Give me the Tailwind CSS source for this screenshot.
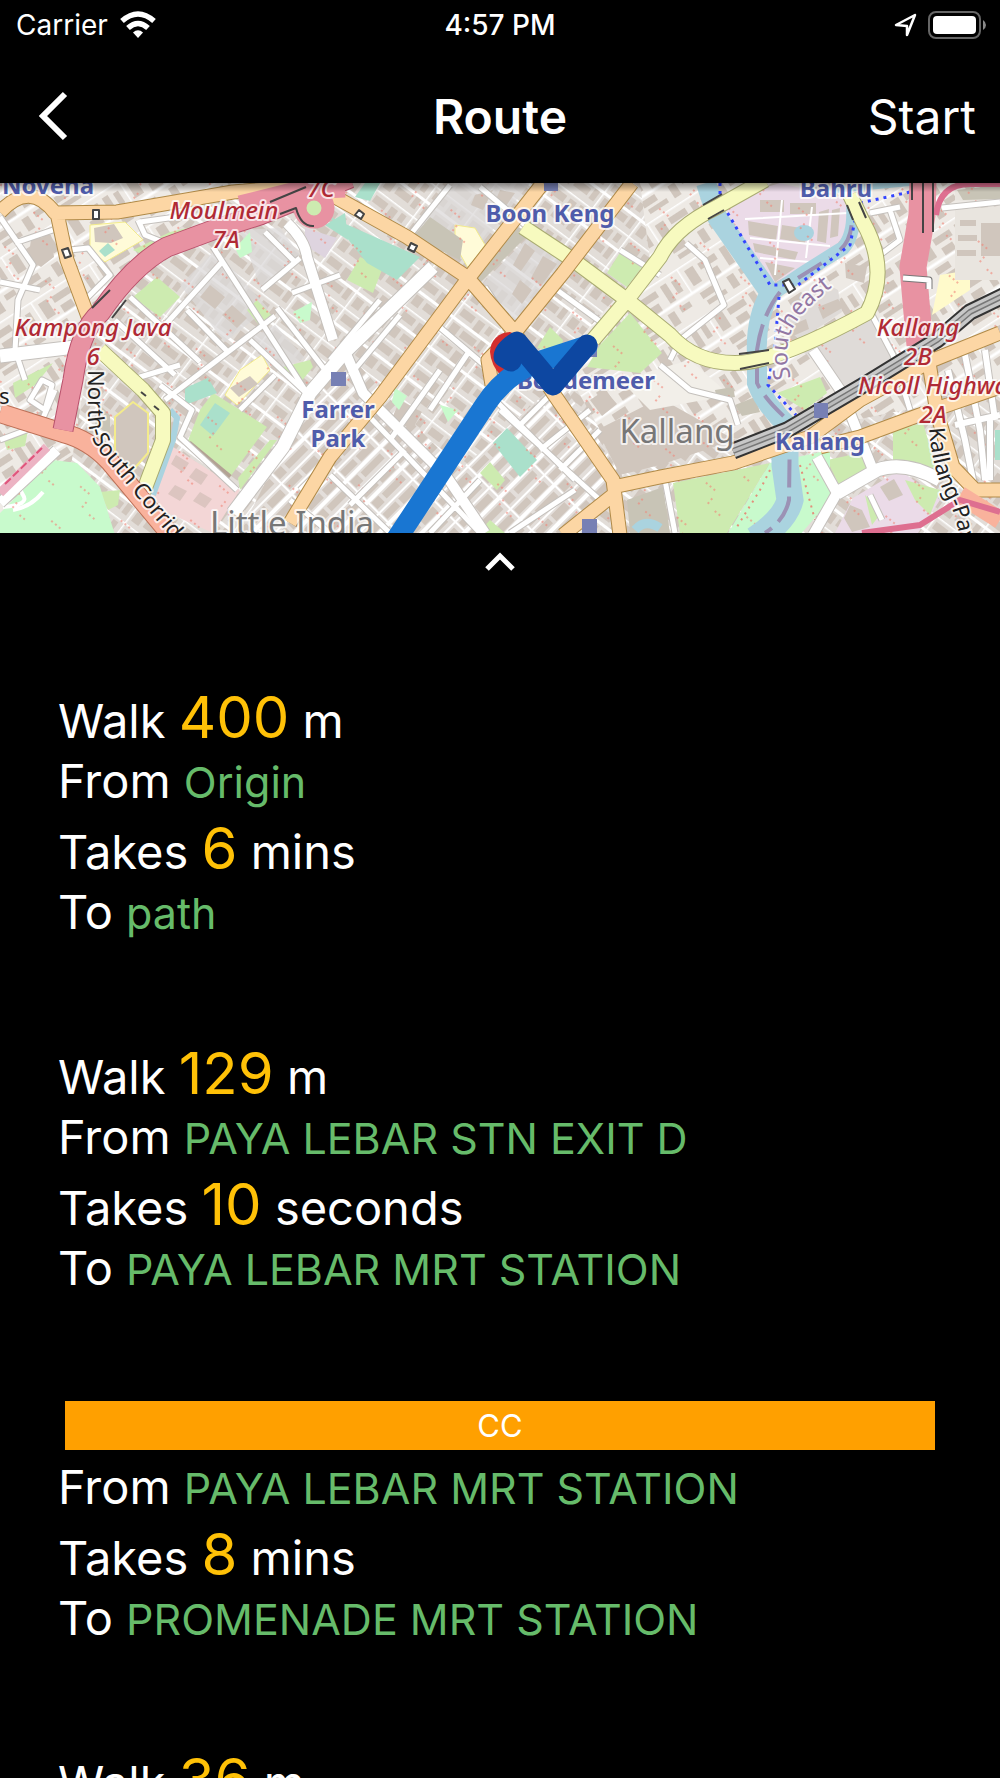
<!DOCTYPE html>
<html lang="en">
<head>
<meta charset="utf-8">
<meta name="viewport" content="width=device-width, initial-scale=1">
<title>Route</title>
<script src="https://cdn.jsdelivr.net/npm/@tailwindcss/browser@4"></script>
</head>
<body class="bg-black text-white font-['Inter',sans-serif]">
<div class="flex h-screen flex-col overflow-hidden">
  <div class="grid h-[50px] shrink-0 grid-cols-3 items-center px-4 text-[28px] leading-none">
    <div class="flex items-center gap-3">
      <span>Carrier</span>
      <svg class="h-7 w-9" viewBox="0 0 36 28" fill="none" stroke="#fff" stroke-width="5.500"><path d="M2 10Q18-4 34 10"/><path d="M8 17Q18 8 28 17"/><path d="M18 27L13 21.500Q18 17 23 21.500Z" fill="#fff" stroke="none"/></svg>
    </div>
    <span class="text-center font-medium">4:57 PM</span>
    <div class="flex items-center justify-end gap-2.5">
      <svg class="h-6 w-6" viewBox="0 0 24 24" fill="none" stroke="#fff" stroke-width="2.500" stroke-linejoin="round"><path d="M21 2L2 12L13 13V22Z"/></svg>
      <svg class="-mr-1 h-7 w-[60px]" viewBox="0 0 60 28"><rect x="1" y="1" width="51" height="26" rx="7" fill="none" stroke="#666" stroke-width="2"/><rect x="5" y="5" width="43" height="18" rx="4" fill="#fff"/><path d="M55 9Q58 11 58 14T55 19Z" fill="#888"/></svg>
    </div>
  </div>

  <header class="grid h-[133px] shrink-0 grid-cols-3 items-center px-6 text-[48px] leading-none">
    <button type="button" aria-label="Back" class="justify-self-start p-3">
      <svg class="h-[52px] w-9" viewBox="0 0 36 52" fill="none" stroke="#fff" stroke-width="6"><path d="M29 3L7 25L29 47"/></svg>
    </button>
    <h1 class="text-center font-semibold">Route</h1>
    <button type="button" class="justify-self-end">Start</button>
  </header>

  <svg class="h-[350px] w-full shrink-0" viewBox="0 183 1000 350" preserveAspectRatio="xMidYMid slice" role="img" aria-label="Route map" font-family="'Noto Sans',sans-serif">
    <defs>
      <pattern id="blocks" width="46" height="38" patternUnits="userSpaceOnUse" patternTransform="rotate(37)">
        <rect width="46" height="38" fill="#e2ddd8"/>
        <path d="M4 5h15v8H4zM23 5h8v12h-8zM35 4h6v9h-6zM4 22h9v11H4zM17 23h17v8H17zM37 20h6v12h-6z" fill="#d0c6bd"/>
        <path d="M0 0H46M0 18.500H46M0 0V38" stroke="#fff" stroke-width="3"/>
      </pattern>
      <pattern id="blocks2" width="70" height="54" patternUnits="userSpaceOnUse" patternTransform="rotate(-33)">
        <rect width="70" height="54" fill="#eeeae5"/>
        <path d="M6 6h10v18H6zM21 7h20v7H21zM24 19h13v9H24zM47 6h7v20h-7zM59 8h6v14h-6zM7 33h16v7H7zM9 43h22v5H9zM38 34h8v14h-8zM52 34h12v6H52z" fill="#d0c6bd"/>
        <path d="M0 0H70M0 0V29H70" fill="none" stroke="#fff" stroke-width="3"/>
      </pattern>
      <pattern id="terraces" width="48" height="30" patternUnits="userSpaceOnUse" patternTransform="rotate(-45)">
        <rect width="48" height="30" fill="#e3deda"/><path d="M3 4h18v7H3zM25 4h19v8H25zM3 18h10v9H3zM17 19h27v7H17z" fill="#d0c6bd"/><path d="M0 0H48M0 15H48M0 0V30" stroke="#fff" stroke-width="4"/>
      </pattern>
      <pattern id="dots" width="53" height="45" patternUnits="userSpaceOnUse" patternTransform="rotate(40)">
        <path d="M3 6h12M28 22h9M18 14v7" stroke="#f08478" stroke-opacity=".8" stroke-width="1.500" stroke-dasharray="2 3"/>
      </pattern>
      <linearGradient id="shade" x1="0" y1="0" x2="0" y2="1"><stop offset="0" stop-color="#000" stop-opacity=".4"/><stop offset="1" stop-color="#000" stop-opacity="0"/></linearGradient>
      <path id="corridor" d="M88 370V415Q88 436 100 452L185 555"/>
      <path id="expressway" d="M929 428Q932 470 947 498T962 570"/>
      <path id="southeast" d="M791 378C778 330 800 312 842 279"/>
    </defs>
    <rect y="183" width="1000" height="350" fill="url(#blocks)"/>
    <path d="M0 183H230L100 300L80 410L60 533H0ZM640 183H1000V390L760 440L600 430L560 360L650 260Z" fill="url(#blocks2)"/>
    <path d="M310 393L345 350L400 410L460 470L560 380L625 480L560 533H240Z" fill="url(#terraces)"/>
    <!-- residential and commercial areas -->
    <path d="M450 183H530L467 262L413 237ZM530 235L570 262L515 322L483 283ZM180 285L215 250L268 308L225 342ZM240 230L280 228L300 255L262 292ZM250 338L275 325L305 358L280 370Z" fill="#dcdad9" fill-opacity=".75"/>
    <path d="M525 243l10 8-14 20-8-6zM543 256l14 8-16 22-10-8zM520 280l12 10-10 14-10-10zM210 285l15 12-10 12-15-12zM232 305l15 13-10 10-15-13zM475 195l18-5-10 20-12-5zM500 190l15 3-14 20-9-4z" fill="#d0c6bd"/>
    <path d="M725 200L780 183L850 200L845 245L770 285L730 225Z" fill="#ebdbe8"/>
    <path d="M760 200h24v12h-24zM790 203h26v11h-26zM748 221l30 5-2 14-27-5zM782 225l26 4-3 14-25-4zM753 243l45 9-3 8-40-8zM819 212l10-3-3 34-9-2zM832 210l8-2-2 28-8 2zM765 262l30 6-20 14z" fill="#d0c6bd"/>
    <path d="M745 219L848 213M750 238L830 246M760 258L810 262M812 207L806 258M782 200L775 275" stroke="#fff" stroke-width="2"/>
    <ellipse cx="804" cy="233" rx="10" ry="8" fill="#aad3df"/>
    <path d="M855 320L800 350L815 360L850 395L900 360L880 320Z" fill="#dfdbd8"/>
    <path d="M820 280L838 290L842 312L800 340L782 325Z" fill="#dfdbd8"/>
    <path d="M818 307l20-8 6 8-21 12zM790 326l16-7 3 10-16 7z" fill="#d0c6bd"/>
    <path d="M167 443L240 490L213 533L150 505Z" fill="#f3d6d6"/>
    <path d="M176 455l13 8-6 9-12-8zM196 468l12 7-7 10-12-8zM175 485l12 6-7 10-12-7zM200 492l12 7-7 9-12-7z" fill="#dcc5c0"/>
    <path d="M853 498L900 470L940 500L918 533H835Z" fill="#ebdbe8"/>
    <path d="M850 505l12 5 8 17-18 5-8-14zM880 487l14-8 9 16-14 6z" fill="#d0c6bd"/>
    <path d="M597 430L660 398L735 440L660 465L620 475Z" fill="#d0c6bd"/>
    <path d="M620 380L690 360L730 395L650 410Z" fill="#f2efe9"/>
    <path d="M590 400l15-10 12 14-15 12zM400 400l22 12-10 18-20-12zM31 240l20-5 3 22-13 10-13-8zM845 263l22 4-3 16-18-5z" fill="#d0c6bd"/>
    <path d="M940 275L970 270V290L932 315Z" fill="#fffacb"/>
    <path d="M90 225L125 222L143 240L105 262L90 250ZM455 225L475 228L485 245L468 268L455 245ZM240 370L262 355L270 370L237 405L225 395Z" fill="#fffbd8" stroke="#f3eb8c"/>
    <path d="M94 228l20-4 9 14-12 5-16-1zM230 388l20-12 8 8-19 13z" fill="#d0c6bd"/>
    <path d="M955 190L1000 190V205L955 200ZM955 210L1000 206V280H955Z" fill="#e9e5df"/>
    <path d="M960 220h16v6h-16zM958 235h19v6h-19zM957 250h19v6h-19zM981 223h19v33h-19z" fill="#d0c6bd"/>
    <path d="M305 228L337 238L325 258L305 245Z" fill="#ded4df"/>
    <!-- parks, pitches and lawns -->
    <g fill="#cdebb0">
      <path d="M213 393L267 427L230 477L187 443L200 410ZM157 277L180 297L160 317L133 297ZM133 250L170 232L213 222L200 238L150 258ZM257 300L273 317L263 330L247 310ZM283 367L310 360L313 367L300 383ZM13 383L53 363L35 385L15 398Z"/>
      <path d="M360 257L383 267L373 293L347 280ZM630 313L662 353L640 373L587 367L600 345ZM623 248L642 267L627 287L607 273ZM550 327L563 340L560 352L537 348ZM490 462L505 480L497 490L480 473ZM490 520L505 533H478Z"/>
      <path d="M673 483L770 463L727 533H680ZM820 377L827 393L805 410L777 393ZM893 430L923 423L937 470L893 460ZM827 460L860 453L873 467L840 487ZM905 480L940 490L930 515L915 500ZM865 495L882 512L872 525ZM100 492L120 490L118 505L108 510ZM3 437L28 430L25 446L7 450ZM238 478L270 440L277 440L240 490Z"/>
    </g>
    <path d="M53 460L77 463L100 487L115 535H0V513ZM770 463L830 450L830 500L800 535H727ZM235 248L250 232L252 252L240 258ZM293 312L312 302L310 320L300 323ZM395 388l12 8-8 14-7-8zM440 405l18 5-10 12z" fill="#c8facc"/>
    <path d="M330 217L420 257L397 280L367 263ZM507 428L537 460L520 477L493 443ZM215 403L230 413L213 436L200 425ZM185 388L208 378L217 393L185 405ZM108 243L115 250L105 257L99 251ZM325 225L345 213L348 240ZM355 197l10-14h15l-10 18zM995 430h5v30h-5z" fill="#aae0cb"/>
    <path d="M430 217L463 240L460 260L413 237ZM518 227L530 233L480 283L476 275ZM627 500L663 487L670 533H630ZM100 405l10 10v20l-15-10zM957 190l43-5v14l-37 1zM715 390l18-3 2 10-18 3zM735 405l20-8 5 15-18 4z" fill="#c8c4b6"/>
    <path d="M189 443L230 477" stroke="#b3a294" stroke-width="5"/>
    <path d="M28 475q-12 10-5 20t-20 12M43 492q-12 15-30 18" fill="none" stroke="#fff" stroke-width="4"/>
    <rect y="183" width="1000" height="350" fill="url(#dots)"/>
    <!-- water -->
    <g fill="none" stroke="#aad3df">
      <path d="M706 183L717 217L770 293Q755 320 757 355V383Q765 405 787 425V470L790 500Q785 520 755 540" stroke-width="20"/>
      <path d="M785 440V465L790 500Q785 520 755 540" stroke-width="27"/>
      <path d="M775 292L803 273L843 248Q855 235 853 205" stroke-width="14"/>
      <path d="M170 410l7 8-4 22-20 55M835 190l75-7" stroke-width="6"/>
      <path d="M635 530q10-12 25-2" stroke-width="9"/>
      <path d="M798 278L830 258M840 250Q852 240 852 217M780 292Q762 315 757 350V383Q765 400 790 422L789 500Q785 520 765 533" stroke="#9b92b5" stroke-width="4" stroke-dasharray="28 9"/>
      <path d="M720 183V200L770 285H798L850 245L856 215M860 203L910 192M779 297L775 345L768 385L796 415" stroke="#3344ff" stroke-width="3" stroke-dasharray="3 5"/>
      <path d="M770 470L760 490L735 530M800 465L815 520" stroke="#e38f7a" stroke-width="2" stroke-dasharray="2 5"/>
    </g>
    <!-- minor roads -->
    <g fill="none" stroke="#c4c0bc" stroke-linejoin="round">
      <path stroke-width="7" d="M213 247L307 393M130 297L200 362M222 262L165 325M187 310L228 352M275 316L165 400M115 320L175 375M250 340L305 392M0 217L33 265L18 300L15 350M0 282L40 290M70 250L88 248L110 275L85 300M15 243L53 230M262 290L300 258M265 232L295 262M292 293L340 275M277 308L325 370M130 380L180 365M160 385L192 410L180 437L237 490M275 375L240 410M410 235L450 185M480 187L525 225M485 287L510 325M380 300L330 360M400 315L350 375M437 325L490 370M365 412L480 533M440 370L390 440M470 350L430 410M490 395L530 435L575 480M500 410L600 500M405 450L350 505M360 430L300 490M480 480L430 533M520 425L570 375M540 450L590 410M560 470L600 430M575 490L510 533M290 500L330 533M330 475L390 533M557 290L605 325M620 250L660 275M686 243L705 260L724 305L680 340L670 360M660 365L690 390L730 400L738 425M665 480L675 533"/>
      <path stroke-width="7" d="M872 315L893 355L910 410M890 210L900 240L880 255M870 213L900 207M942 208L1000 202M0 440L40 425L55 390M25 380L15 350M42 380L30 400L45 410L52 385ZM870 495L882 520M138 220L145 235L165 243M140 222L190 215"/>
      <path stroke-width="8" d="M948 370L965 440L975 490M965 355L980 430L985 480M985 350L995 420M955 425L1000 415M990 420V480"/>
      <path stroke-width="12" d="M287 223Q305 240 307 257L333 340M817 457L837 493L813 535M813 350L847 400M850 413L873 470M0 503L57 450M343 347L363 393L447 477L485 533"/>
      <path stroke-width="15" d="M433 267L345 352L310 393L283 447L233 513M0 356L75 347M837 493L877 470Q905 460 940 480"/>
    </g>
    <g fill="none" stroke="#fff" stroke-linejoin="round">
      <path stroke-width="5" d="M213 247L307 393M130 297L200 362M222 262L165 325M187 310L228 352M275 316L165 400M115 320L175 375M250 340L305 392M0 217L33 265L18 300L15 350M0 282L40 290M70 250L88 248L110 275L85 300M15 243L53 230M262 290L300 258M265 232L295 262M292 293L340 275M277 308L325 370M130 380L180 365M160 385L192 410L180 437L237 490M275 375L240 410M410 235L450 185M480 187L525 225M485 287L510 325M380 300L330 360M400 315L350 375M437 325L490 370M365 412L480 533M440 370L390 440M470 350L430 410M490 395L530 435L575 480M500 410L600 500M405 450L350 505M360 430L300 490M480 480L430 533M520 425L570 375M540 450L590 410M560 470L600 430M575 490L510 533M290 500L330 533M330 475L390 533M557 290L605 325M620 250L660 275M686 243L705 260L724 305L680 340L670 360M660 365L690 390L730 400L738 425M665 480L675 533"/>
      <path stroke-width="5" d="M872 315L893 355L910 410M890 210L900 240L880 255M870 213L900 207M942 208L1000 202M0 440L40 425L55 390M25 380L15 350M42 380L30 400L45 410L52 385ZM870 495L882 520M138 220L145 235L165 243M140 222L190 215"/>
      <path stroke-width="6" d="M948 370L965 440L975 490M965 355L980 430L985 480M985 350L995 420M955 425L1000 415M990 420V480"/>
      <path stroke-width="10" d="M287 223Q305 240 307 257L333 340M817 457L837 493L813 535M813 350L847 400M850 413L873 470M0 503L57 450M343 347L363 393L447 477L485 533"/>
      <path stroke-width="13" d="M433 267L345 352L310 393L283 447L233 513M0 356L75 347M837 493L877 470Q905 460 940 480"/>
    </g>
    <path d="M133 402L148 413V453L133 470L115 457V417Z" fill="#d0c6bd" stroke="#f3eb8c" stroke-width="2"/>
    <!-- arterial casings, then fills -->
    <g fill="none" stroke-linejoin="round">
      <path d="M0 493L47 447" stroke="#ecb3c3" stroke-width="9"/><path d="M5 484L42 448" stroke="#e0557c" stroke-width="2" stroke-dasharray="8 3"/>
      <path d="M523 227L573 260L627 300L670 335Q695 363 735 363T867 313Q890 270 863 222L850 195M593 340L627 300L660 257Q675 227 717 207L765 180M100 350L143 390L163 413V440L143 493" stroke="#a9ab72" stroke-width="16"/>
      <path d="M523 227L573 260L627 300L670 335Q695 363 735 363T867 313Q890 270 863 222L850 195M593 340L627 300L660 257Q675 227 717 207L765 180M100 350L143 390L163 413V440L143 493" stroke="#f7fabf" stroke-width="14"/>
      <path d="M0 212Q30 180 55 213L117 212L233 192L300 186M57 213L67 260L90 322M310 183L407 237L467 277L513 330L553 393L613 480L620 535M290 523L330 457L380 397L467 280L543 183M492 385L488 360L517 330L563 273L632 183M613 487L660 477L733 463L810 437L860 400L933 360L1000 333M820 447L860 437L933 410L1000 387M613 495L563 535M927 350L937 413L953 467L975 490H1000" stroke="#b08a48" stroke-width="15"/>
      <path d="M0 212Q30 180 55 213L117 212L233 192L300 186M57 213L67 260L90 322M310 183L407 237L467 277L513 330L553 393L613 480L620 535M290 523L330 457L380 397L467 280L543 183M492 385L488 360L517 330L563 273L632 183M613 487L660 477L733 463L810 437L860 400L933 360L1000 333M820 447L860 437L933 410L1000 387M613 495L563 535M927 350L937 413L953 467L975 490H1000" stroke="#fcd6a4" stroke-width="13"/>
      <path d="M0 413L63 433Q90 440 110 462L175 540" stroke="#bd7057" stroke-width="20"/>
      <path d="M0 413L63 433Q90 440 110 462L175 540M960 495L1000 520" stroke="#f9b29c" stroke-width="18"/>
      <path d="M63 430L73 380Q80 330 100 313Q133 265 167 247L213 230L260 215L350 178" stroke="#b9526c" stroke-width="21"/>
      <path d="M63 430L73 380Q80 330 100 313Q133 265 167 247L213 230L260 215L350 178" stroke="#e892a2" stroke-width="19"/>
      <path d="M240 205L300 190L345 188" stroke="#e892a2" stroke-width="19"/>
      <circle cx="314" cy="208" r="14" fill="#cdebb0" stroke="#e892a2" stroke-width="13"/>
      <path d="M280 214l16-6q5 19 18 18M270 202L306 187M92 308L110 290M112 318L126 300" stroke="#444" stroke-width="2"/>
      <path d="M923 180L922 215L913 267L917 313L920 345" stroke="#e892a2" stroke-width="27"/>
      <path d="M936 215Q940 184 970 184H1000M862 533L920 525L960 500L1000 512" stroke="#de6f90" stroke-width="6"/>
      <path d="M923 183V233M933 183V232M912 183V200" stroke="#444" stroke-width="2"/>
      <path d="M903 278L929 280V289" stroke="#777" stroke-width="7"/><path d="M903 278L929 280V289" stroke="#fff" stroke-width="5"/>
      <path d="M733 451L787 430L867 383L937 340L970 312L1005 295" stroke="#333" stroke-width="17"/>
      <path d="M733 451L787 430L867 383L937 340L970 312L1005 295" stroke="#c8c8c8" stroke-width="13"/>
      <path d="M733 451L787 430L867 383L937 340L970 312L1005 295" stroke="#777" stroke-width="6"/>
      <path d="M733 451L787 430L867 383L937 340L970 312L1005 295" stroke="#bbb" stroke-width="3"/>
      <path d="M739 354L769 350M740 369L769 363M703 205L722 194M708 219L724 210M847 205L853 220M859 202L866 218" stroke="#444" stroke-width="2"/>
      <path d="M783 282l6-3 6 10-6 4zM93 210h6v9h-6zM62 250l6-2 3 8-6 2zM359 210l5 4-3 5-6-4zM411 243l6 3-3 6-6-3zM141 392l5 4M154 406l5 4" stroke="#444" fill="#fff" stroke-width="2"/>
    </g>
    <g fill="#7780b4"><path d="M331 372h15v14h-15zM544 183h14v8h-14zM582 519h15v14h-15zM814 403h14v15h-14zM583 345h14v12h-14z"/></g>
    <!-- place names -->
    <g paint-order="stroke" stroke="#fff" stroke-opacity=".75" stroke-width="4" stroke-linejoin="round" text-anchor="middle" font-size="24">
      <g fill="#777" font-size="33"><text x="292" y="535">Little India</text><text x="677" y="443">Kallang</text></g>
      <g fill="#4f5cab" font-weight="bold"><text x="48" y="194">Novena</text><text x="550" y="222">Boon Keng</text><text x="338" y="418">Farrer</text><text x="338" y="447">Park</text><text x="586" y="389">Bendemeer</text><text x="836" y="197">Bahru</text><text x="820" y="450">Kallang</text></g>
      <g fill="#b02a35" font-style="italic" font-weight="500"><text x="93" y="336">Kampong Java</text><text x="93" y="365">6</text><text x="224" y="219">Moulmein</text><text x="226" y="248">7A</text><text x="321" y="197">7C</text><text x="918" y="336">Kallang</text><text x="918" y="365">2B</text><text x="939" y="394">Nicoll Highway</text><text x="933" y="423">2A</text></g>
      <g fill="#222" text-anchor="start" font-size="22"><text x="-1" y="404">s</text><text><textPath href="#corridor">North-South Corridor</textPath></text><text><textPath href="#expressway">Kallang-Paya</textPath></text></g>
      <text fill="#9277a4" text-anchor="start" font-size="23"><textPath href="#southeast">Southeast</textPath></text>
    </g>
    <!-- origin marker and route -->
    <path d="M510 332A20 20 0 0 0 490 352Q491 365 501 376L530 362L528 340Z" fill="#d32f2f"/>
    <g fill="none" stroke-linecap="round" stroke-linejoin="round" stroke-width="21">
      <path d="M392 546L485 405Q503 377 535 363L587 346" stroke="#1976d2"/>
      <path d="M511 361L504 357Q504 350 517 342L553 385L587 345M506 355L517 348" stroke="#0d47a1"/>
    </g>
    <rect y="183" width="1000" height="9" fill="url(#shade)"/>
  </svg>

  <main class="flex min-h-0 flex-1 flex-col overflow-hidden">
    <button type="button" aria-label="Expand route details" class="mt-3 self-center p-1">
      <svg class="h-7 w-9" viewBox="0 0 36 28" fill="none" stroke="#fff" stroke-width="5"><path d="M5 20L18 7L31 20"/></svg>
    </button>
    <ol class="mt-[98px] flex flex-col gap-[94px] px-[58px] text-[47px] leading-[58px] whitespace-nowrap">
      <li>
        <p class="pt-[9px] pb-0.5">Walk <span class="text-[58px] leading-none text-[#ffc107]">400</span> m</p>
        <p>From <span class="text-[43px] leading-none text-[#66bb6a]">Origin</span></p>
        <p class="pt-[9px] pb-0.5">Takes <span class="text-[58px] leading-none text-[#ffc107]">6</span> mins</p>
        <p>To <span class="text-[43px] leading-none text-[#66bb6a]">path</span></p>
      </li>
      <li>
        <p class="pt-[9px] pb-0.5">Walk <span class="text-[58px] leading-none text-[#ffc107]">129</span> m</p>
        <p>From <span class="text-[43px] leading-none text-[#66bb6a]">PAYA LEBAR STN EXIT D</span></p>
        <p class="pt-[9px] pb-0.5">Takes <span class="text-[58px] leading-none text-[#ffc107]">10</span> seconds</p>
        <p>To <span class="text-[43px] leading-none text-[#66bb6a]">PAYA LEBAR MRT STATION</span></p>
      </li>
      <li>
        <p class="mx-[7px] mt-2.5 mb-2 bg-[#ffa000] text-center text-[31px] leading-[49px]">CC</p>
        <p>From <span class="text-[43px] leading-none text-[#66bb6a]">PAYA LEBAR MRT STATION</span></p>
        <p class="pt-[9px] pb-0.5">Takes <span class="text-[58px] leading-none text-[#ffc107]">8</span> mins</p>
        <p>To <span class="text-[43px] leading-none text-[#66bb6a]">PROMENADE MRT STATION</span></p>
      </li>
      <li>
        <p class="pt-[9px] pb-0.5">Walk <span class="text-[58px] leading-none text-[#ffc107]">36</span> m</p>
      </li>
    </ol>
  </main>
</div>
</body>
</html>
